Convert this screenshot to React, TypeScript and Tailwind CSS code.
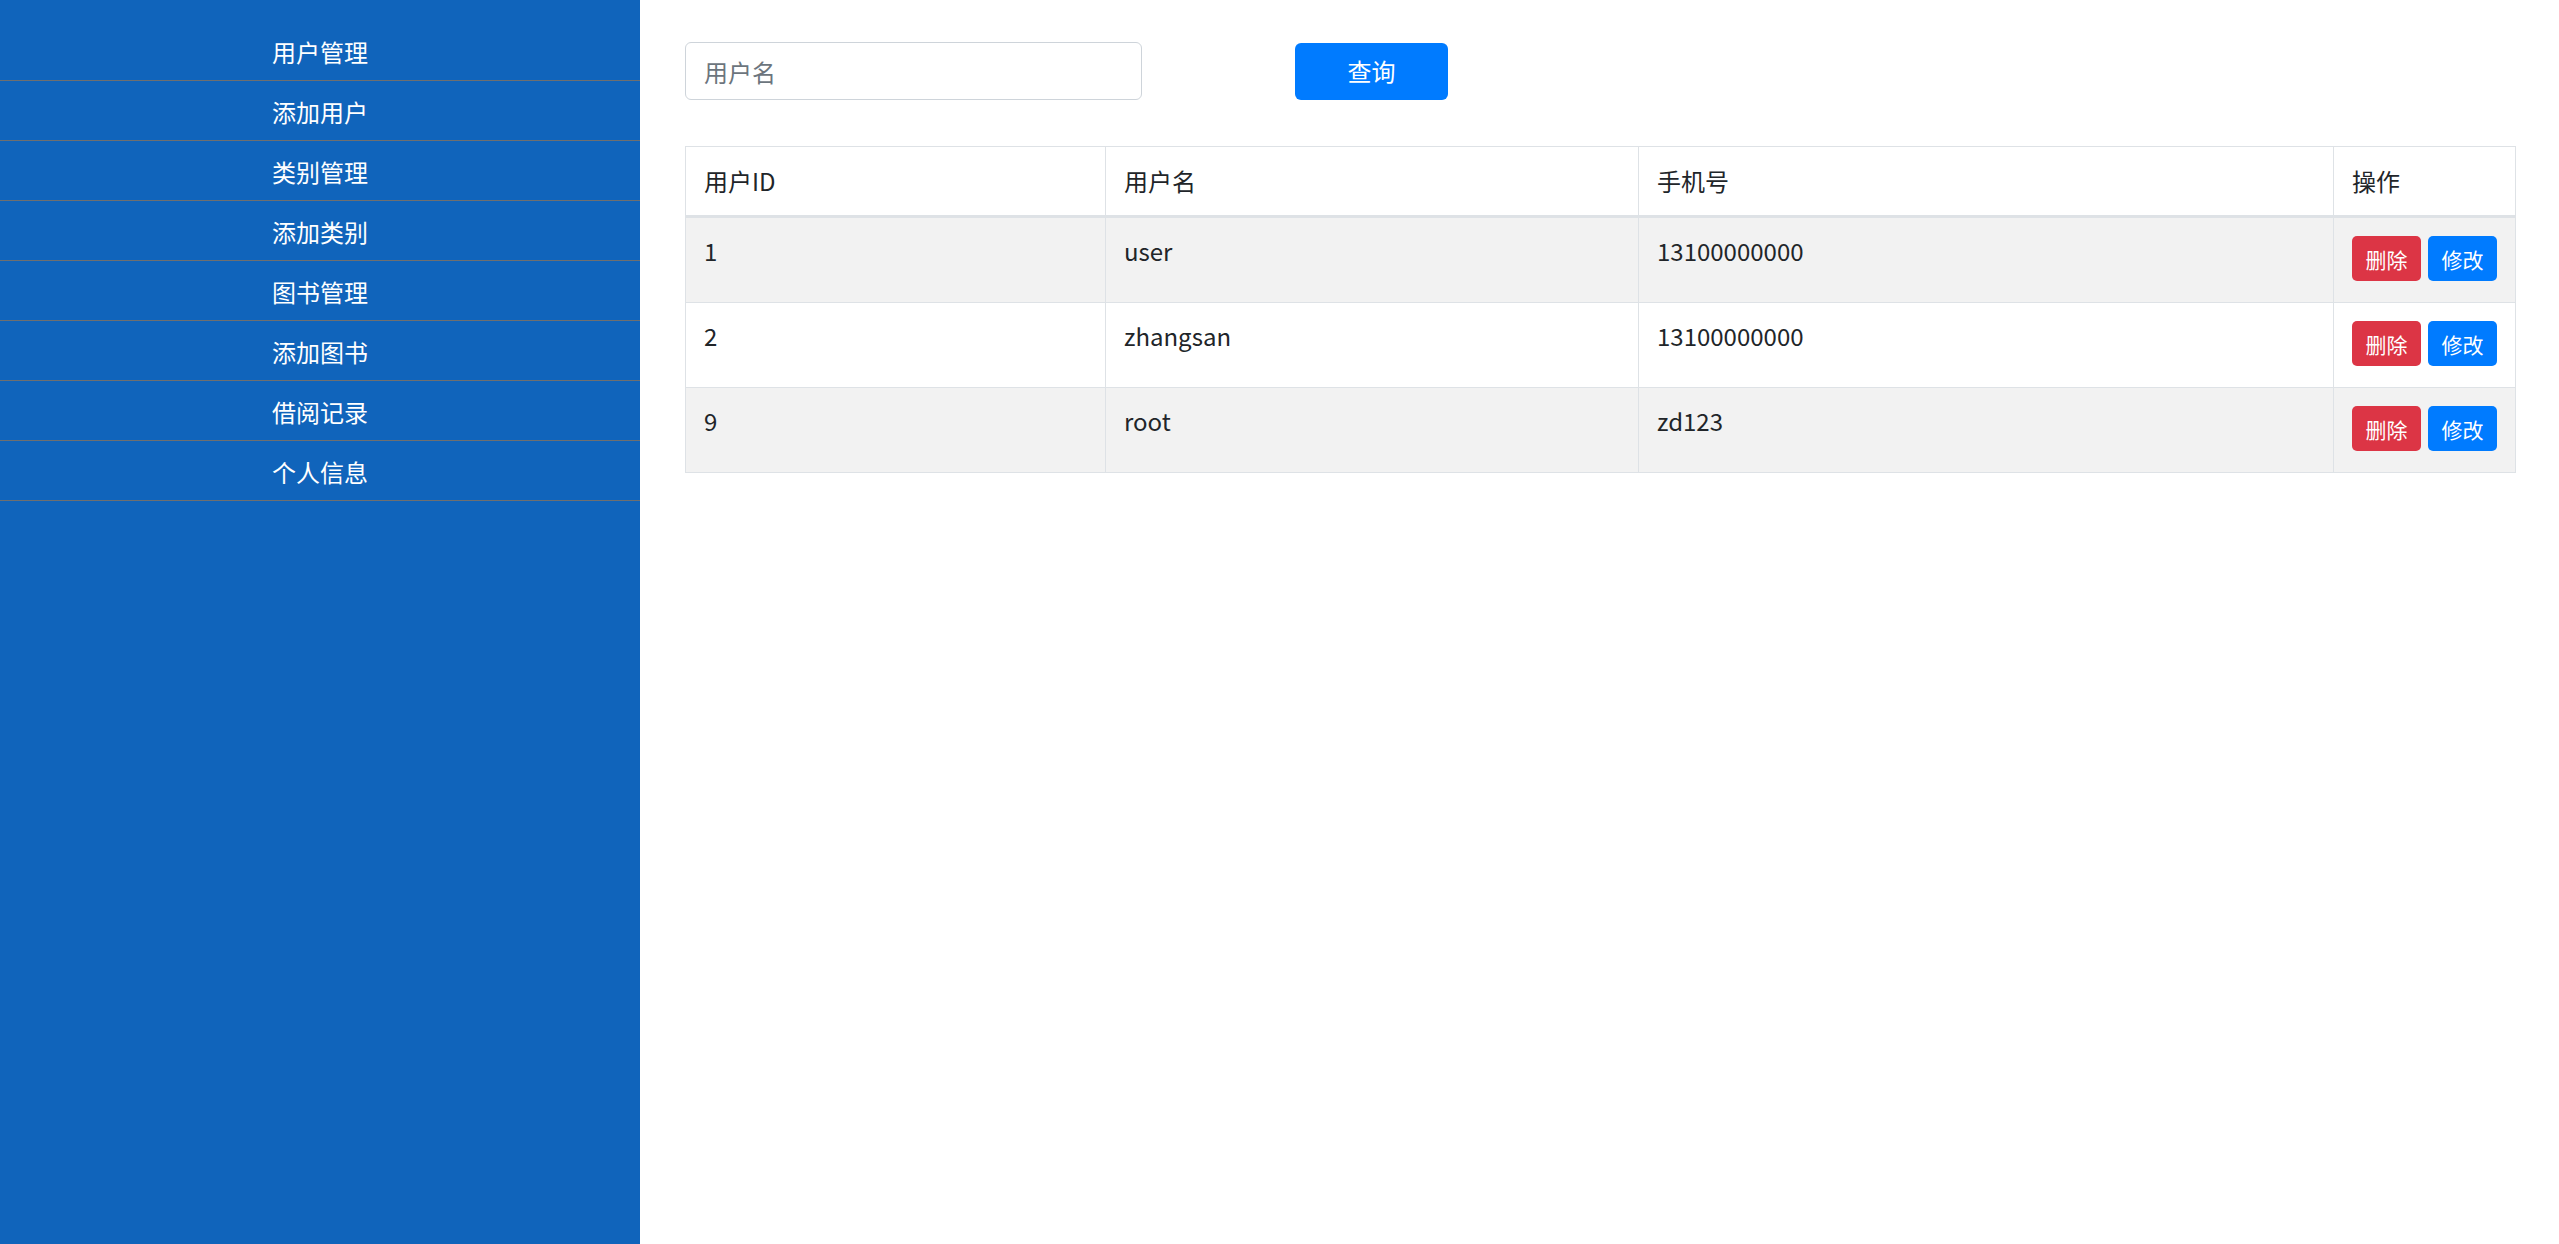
import React from "react";

const menu = [
  "用户管理",
  "添加用户",
  "类别管理",
  "添加类别",
  "图书管理",
  "添加图书",
  "借阅记录",
  "个人信息",
];

const users = [
  { id: 1, name: "user", phone: "13100000000" },
  { id: 2, name: "zhangsan", phone: "13100000000" },
  { id: 9, name: "root", phone: "zd123" },
];

export default function App() {
  return (
    <div
      className="flex min-h-[1244px] text-[#212529]"
      style={{ fontFamily: '"Noto Sans CJK SC", "Noto Sans", sans-serif' }}
    >
      {/* Sidebar */}
      <aside className="w-[640px] shrink-0 bg-[#1064bb] pt-[21px]">
        <ul>
          {menu.map((item) => (
            <li
              key={item}
              className="h-[60px] border-b border-[#6f6f6f] flex items-center justify-center text-white text-[24px] leading-[36px] pt-[2px]"
            >
              {item}
            </li>
          ))}
        </ul>
      </aside>

      {/* Main content */}
      <main className="flex-1 pl-[45px] pr-[43px] pt-[42px]">
        <div className="flex items-center">
          <input
            type="text"
            placeholder="用户名"
            className="w-[457px] h-[58px] px-[18px] text-[24px] border border-[#ced4da] rounded-[6px] bg-white placeholder:text-[#6c757d] outline-none"
          />
          <button className="ml-[153px] w-[153px] h-[57px] rounded-[6px] bg-[#007bff] text-white text-[24px]">
            查询
          </button>
        </div>

        <table className="mt-[46px] w-full border-collapse table-fixed text-[24px] leading-[36px]">
          <thead>
            <tr>
              <th className="w-[420px] text-left font-normal px-[18px] py-[16px] border border-[#dee2e6] border-b-[3px]">
                用户ID
              </th>
              <th className="w-[533px] text-left font-normal px-[18px] py-[16px] border border-[#dee2e6] border-b-[3px]">
                用户名
              </th>
              <th className="w-[695px] text-left font-normal px-[18px] py-[16px] border border-[#dee2e6] border-b-[3px]">
                手机号
              </th>
              <th className="text-left font-normal px-[18px] py-[16px] border border-[#dee2e6] border-b-[3px]">
                操作
              </th>
            </tr>
          </thead>
          <tbody>
            {users.map((u, i) => (
              <tr key={u.id} className={i % 2 === 0 ? "bg-[#f2f2f2]" : "bg-white"}>
                <td className="align-top px-[18px] pt-[15px] border border-[#dee2e6]">{u.id}</td>
                <td className="align-top px-[18px] pt-[15px] border border-[#dee2e6]">{u.name}</td>
                <td className="align-top px-[18px] pt-[15px] border border-[#dee2e6]">{u.phone}</td>
                <td className="align-top px-[18px] pt-[18px] pb-[21px] border border-[#dee2e6]">
                  <div className="flex gap-[7px]">
                    <button className="w-[69px] h-[45px] rounded-[5px] bg-[#dc3545] text-white text-[21px]">
                      删除
                    </button>
                    <button className="w-[69px] h-[45px] rounded-[5px] bg-[#007bff] text-white text-[21px]">
                      修改
                    </button>
                  </div>
                </td>
              </tr>
            ))}
          </tbody>
        </table>
      </main>
    </div>
  );
}
